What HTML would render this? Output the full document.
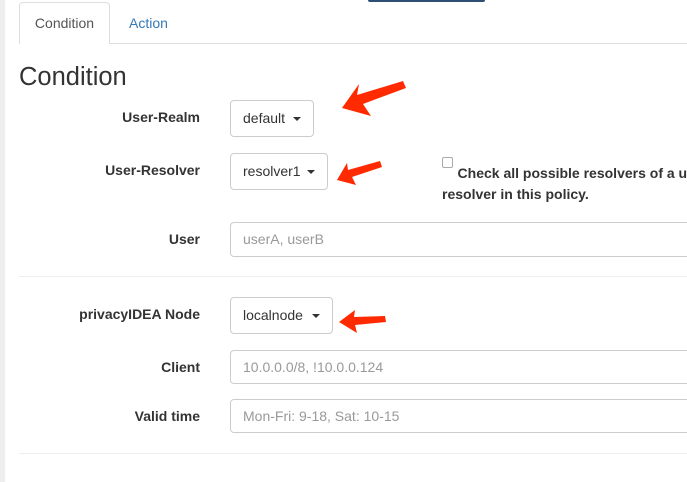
<!DOCTYPE html>
<html><head><style>
body{margin:0;width:687px;height:482px;overflow:hidden;background:#fff;font-family:"Liberation Sans",sans-serif;position:relative;color:#333}
.a{position:absolute}
.lbl{position:absolute;right:487px;font-size:14px;font-weight:bold;color:#333;white-space:nowrap}
.sel{position:absolute;left:230px;border:1px solid #ccc;border-radius:4px;background:#fff;font-size:14px;color:#333;box-sizing:border-box;padding-left:12px;line-height:35px}
.sel:after{content:"";position:absolute;right:12px;top:16px;border-left:4px solid transparent;border-right:4px solid transparent;border-top:4px solid #333}
.inp{position:absolute;left:230px;width:480px;border:1px solid #ccc;border-radius:4px;box-sizing:border-box;font-size:14px;color:#999;padding-left:12px}
</style></head><body>
<div class="a" style="left:0;top:0;width:5px;height:482px;background:#eee"></div>
<div class="a" style="left:368px;top:0;width:117px;height:2px;background:#2d4f73;border-radius:0 0 3px 3px"></div>
<div class="a" style="left:19px;top:43px;width:668px;height:1px;background:#ddd"></div>
<div class="a" style="left:19px;top:2px;width:91px;height:42px;border:1px solid #ddd;border-bottom:none;border-radius:4px 4px 0 0;background:#fff;box-sizing:border-box;font-size:14px;line-height:40px;text-align:center;color:#555">Condition</div>
<div class="a" style="left:129px;top:15px;font-size:14px;color:#337ab7">Action</div>
<div class="a" style="left:19px;top:63px;font-size:25.5px;color:#333">Condition</div>

<div class="lbl" style="top:109px">User-Realm</div>
<div class="sel" style="top:100px;width:84px;height:37px">default</div>
<div class="lbl" style="top:162px">User-Resolver</div>
<div class="sel" style="top:153px;width:98px;height:37px">resolver1</div>
<div class="a" style="left:442px;top:157px;width:11px;height:11px;border:1px solid #aaa;border-radius:2px;box-sizing:border-box"></div>
<div class="a" style="left:442px;top:163px;font-size:14px;font-weight:bold;line-height:21px;white-space:nowrap;color:#333">&nbsp;&nbsp;&nbsp;&nbsp;Check all possible resolvers of a user<br>resolver in this policy.</div>
<div class="lbl" style="top:231px">User</div>
<div class="inp" style="top:222px;height:35px;line-height:33px">userA, userB</div>
<div class="a" style="left:19px;top:276px;width:668px;height:1px;background:#eee"></div>
<div class="lbl" style="top:306px">privacyIDEA Node</div>
<div class="sel" style="top:297px;width:103px;height:37px">localnode</div>
<div class="lbl" style="top:359px">Client</div>
<div class="inp" style="top:350px;height:34px;line-height:32px">10.0.0.0/8, !10.0.0.124</div>
<div class="lbl" style="top:408px">Valid time</div>
<div class="inp" style="top:399px;height:34px;line-height:32px">Mon-Fri: 9-18, Sat: 10-15</div>
<div class="a" style="left:19px;top:453px;width:668px;height:1px;background:#eee"></div>

<svg class="a" style="left:0;top:0" width="687" height="482">
<polygon fill="#ff2a00" points="342,108 359,84 357,95 403,81 406,88 363,104 371,116"/>
<polygon fill="#ff2a00" points="337,180 347,163 348,170 380,161 382,167 352,177 356,185"/>
<polygon fill="#ff2a00" points="339,322 355,310 354,317 385,316 386,322 355,325 357,333"/>
</svg>
</body></html>
